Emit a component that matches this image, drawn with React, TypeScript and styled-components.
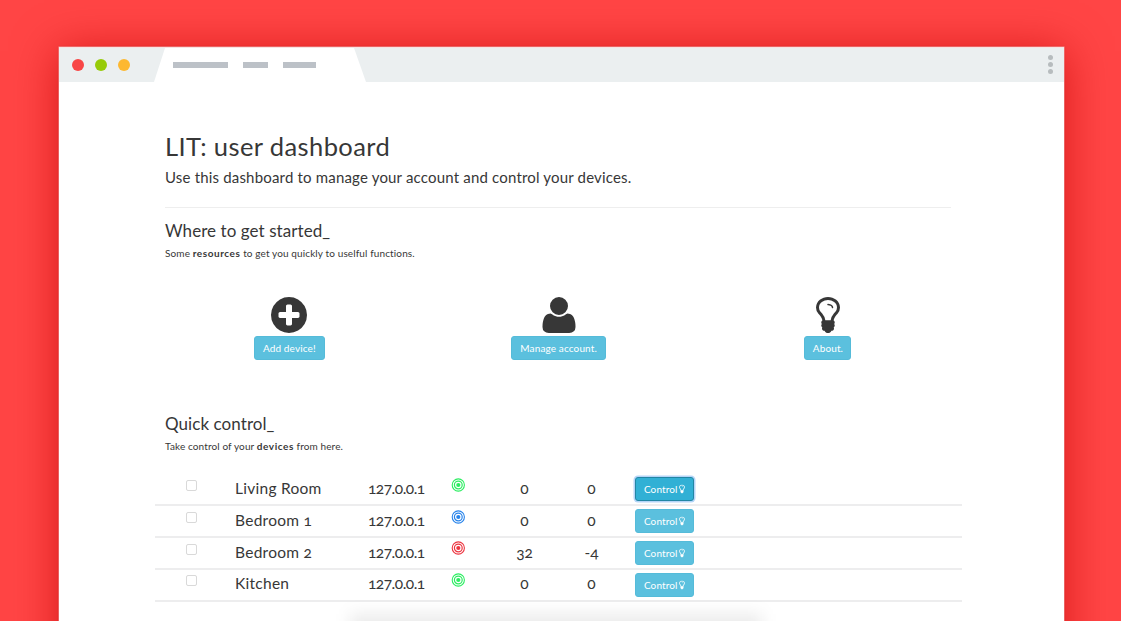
import React from "react";
import styled, { createGlobalStyle } from "styled-components";

const GlobalStyle = createGlobalStyle`
  * { box-sizing: border-box; }
  body {
    margin: 0;
    height: 621px;
    overflow: hidden;
    background: #ff4545;
    color: #373737;
    font-family: Lato, "Open Sans", sans-serif;
    font-feature-settings: "onum" 1;
  }
  h1, h2, p { margin: 0; font-weight: 400; white-space: nowrap; }
`;

const Page = styled.div`
  height: 621px;
  padding: 47px 57px 0 59px;
  overflow: hidden;
`;

const Window = styled.main`
  position: relative;
  height: 640px;
  background: #fff;
  box-shadow: 0 0 0 0.5px rgba(255, 205, 205, 0.7), 0 0 2px rgba(150, 0, 0, 0.4),
    0 4px 42px rgba(195, 0, 0, 0.66);
`;

const TitleBar = styled.header`
  display: flex;
  align-items: center;
  height: 35px;
  padding: 0 11px 0 12.5px;
  background: #ebeff0;
  border-top: 1px solid #f6e4e4;
`;

const Lights = styled.div`
  display: flex;
  gap: 11.4px;
  width: 82.5px;
  margin-top: -1px;
`;

const Light = styled.span<{ $color: string }>`
  width: 12px;
  height: 12px;
  border-radius: 50%;
  background: ${(p) => p.$color};
`;

const Tab = styled.div`
  display: flex;
  align-items: center;
  gap: 15px;
  width: 212px;
  height: 34px;
  padding-left: 19px;
  background: #fff;
  clip-path: polygon(11px 0, 200px 0, 212px 100%, 0 100%);
`;

const Dash = styled.span<{ $width: number }>`
  width: ${(p) => p.$width}px;
  height: 6px;
  background: #bcc1c7;
`;

const More = styled.div`
  display: flex;
  flex-direction: column;
  gap: 2px;
  margin: -2px 0 0 auto;
`;

const MoreDot = styled.span`
  width: 5px;
  height: 5px;
  border-radius: 50%;
  background: #b7bcbe;
`;

const Content = styled.div`
  padding: 49px 102px 0 96px;
`;

const Intro = styled.section`
  height: 77px;
  margin: 0 11px 0 10px;
  border-bottom: 1px solid #eee;
`;

const Title = styled.h1`
  font-size: 25.5px;
  line-height: 30px;
  letter-spacing: 0.4px;
`;

const Lead = styled.p`
  margin-top: 6px;
  font-size: 15px;
  line-height: 20px;
  letter-spacing: 0.18px;
`;

const Section = styled.section<{ $top: number }>`
  padding: ${(p) => p.$top}px 10px 0;
`;

const SectionTitle = styled.h2`
  font-size: 17px;
  line-height: 22px;
  letter-spacing: 0.07px;
`;

const Hint = styled.p`
  margin-top: 4px;
  font-size: 10px;
  line-height: 14px;
  letter-spacing: 0.12px;

  b { font-weight: 700; letter-spacing: 0.55px; }
`;

const Shortcuts = styled.div`
  display: grid;
  grid-template-columns: repeat(3, 269.3px);
  margin-top: 34px;
  margin-left: -10.3px;
  height: 66px;
`;

const Shortcut = styled.div`
  display: flex;
  flex-direction: column;
  align-items: center;

  > svg { display: block; }
`;

const Button = styled.button<{ $width: number; $active?: boolean }>`
  display: flex;
  align-items: center;
  justify-content: center;
  gap: 1.5px;
  width: ${(p) => p.$width}px;
  height: 24px;
  padding: 0;
  border: 1px solid ${(p) => (p.$active ? "#2386a4" : "#55bbd9")};
  border-radius: 3px;
  background: ${(p) => (p.$active ? "#31b0d5" : "#5bc0de")};
  box-shadow: ${(p) => (p.$active ? "0 0 0 1.5px #b5d5f8" : "none")};
  color: #fff;
  font: 400 10px/14px Lato, sans-serif;
  letter-spacing: 0.13px;
  white-space: nowrap;
`;

const Table = styled.div`
  margin-top: 21.6px;
`;

const Row = styled.div`
  display: grid;
  grid-template-columns: 80px 133px 83px 40px 67px 67px 1fr;
  height: 31.8px;
  border-bottom: 2px solid #ededee;
`;

const Cell = styled.span<{ $center?: boolean; $spacing?: number }>`
  padding-top: 3.5px;
  font-size: 15.5px;
  line-height: 20px;
  letter-spacing: ${(p) => p.$spacing ?? 0}px;
  text-align: ${(p) => (p.$center ? "center" : "left")};
  white-space: nowrap;
`;

const Checkbox = styled.span`
  width: 11px;
  height: 11px;
  margin: 5.4px 0 0 31px;
  border: 1px solid #d9d9d9;
  border-radius: 2px;
  background: #fff;
`;

const SignalSlot = styled.span`
  padding-top: 3.2px;

  svg { display: block; }
`;

const ButtonSlot = styled.span`
  padding: 2.8px 0 0 10px;
`;

const DockShadow = styled.div`
  position: absolute;
  left: 291px;
  top: 567px;
  width: 412px;
  height: 40px;
  background: rgba(0, 0, 0, 0.08);
  filter: blur(8px);
`;

const icons = {
  plus: "M1344 960v-128q0-26-19-45t-45-19h-256v-256q0-26-19-45t-45-19h-128q-26 0-45 19t-19 45v256h-256q-26 0-45 19t-19 45v128q0 26 19 45t45 19h256v256q0 26 19 45t45 19h128q26 0 45-19t19-45v-256h256q26 0 45-19t19-45zM1664 896q0 209-103 385.500t-279.500 279.500-385.500 103-385.500-103-279.500-279.500-103-385.500 103-385.500 279.500-279.500 385.500-103 385.500 103 279.500 279.500 103 385.500z",
  user: "M1600 1405q0 120-73 189.500t-194 69.500h-874q-121 0-194-69.500t-73-189.500q0-53 3.500-103.500t14-109 26.500-108.500 43-97.500 62-81 85.500-53.500 111.500-20q9 0 42 21.500t74.500 48 108 48 133.500 21.500 133.500-21.500 108-48 74.500-48 42-21.500q61 0 111.500 20t85.500 53.500 62 81 43 97.500 26.500 108.500 14 109 3.500 103.500zM1280 512q0 159-112.500 271.500t-271.500 112.500-271.500-112.500-112.500-271.500 112.500-271.500 271.500-112.500 271.500 112.500 112.500 271.500z",
  bulb: "M1120 576q0 13-9.500 22.500t-22.500 9.500-22.500-9.500-9.500-22.500q0-46-54-71t-106-25q-13 0-22.500-9.500t-9.500-22.500 9.500-22.500 22.500-9.500q50 0 99.500 16t87 54 37.500 90zM1280 576q0-72-34.500-134t-90-101.500-123-62-136.500-22.500-136.500 22.500-123 62-90 101.500-34.500 134q0 101 68 180 10 11 30.500 33t30.500 33q128 153 141 298h228q13-145 141-298 10-11 30.500-33t30.500-33q68-79 68-180zM1408 576q0 155-103 268-45 49-74.500 87t-59.500 95.500-34 107.500q47 28 47 82 0 37-25 64 25 27 25 64 0 52-45 81 13 23 13 47 0 46-31.500 71t-77.500 25q-20 44-60 70t-87 26-87-26-60-70q-46 0-77.500-25t-31.500-71q0-24 13-47-45-29-45-81 0-37 25-64-25-27-25-64 0-54 47-82-4-50-34-107.500t-59.500-95.500-74.500-87q-103-113-103-268 0-99 44.500-184.500t117-142 164-89 186.500-32.500 186.500 32.500 164 89 117 142 44.500 184.500z",
};

function Icon({ name, size }: { name: keyof typeof icons; size: number }) {
  const narrow = size < 20;
  return (
    <svg
      width={narrow ? size * 0.6 : size}
      height={size}
      viewBox={narrow ? "358 0 1076 1792" : "0 0 1792 1792"}
      fill="currentColor"
    >
      <path d={icons[name]} />
    </svg>
  );
}

function Signal({ color }: { color: string }) {
  return (
    <svg width="14" height="14" viewBox="0 0 14 14" fill="none" stroke={color}>
      <circle cx="7.3" cy="7" r="6.1" strokeWidth="1.1" />
      <circle cx="7.3" cy="7" r="3.9" strokeWidth="1.2" />
      <circle cx="7.3" cy="7" r="2.1" fill={color} stroke="none" />
    </svg>
  );
}

const shortcuts: { icon: keyof typeof icons; label: string; width: number }[] = [
  { icon: "plus", label: "Add device!", width: 71.5 },
  { icon: "user", label: "Manage account.", width: 95 },
  { icon: "bulb", label: "About.", width: 47 },
];

const devices = [
  { name: "Living Room", ip: "127.0.0.1", color: "#2bed61", a: "0", b: "0", active: true },
  { name: "Bedroom 1", ip: "127.0.0.1", color: "#2783ea", a: "0", b: "0" },
  { name: "Bedroom 2", ip: "127.0.0.1", color: "#ec3540", a: "32", b: "-4" },
  { name: "Kitchen", ip: "127.0.0.1", color: "#2bed61", a: "0", b: "0" },
];

export default function App() {
  return (
    <Page>
      <GlobalStyle />
      <Window>
        <TitleBar>
          <Lights>
            <Light $color="#f84646" />
            <Light $color="#97cb09" />
            <Light $color="#fdb831" />
          </Lights>
          <Tab>
            <Dash $width={55} />
            <Dash $width={25} />
            <Dash $width={33} />
          </Tab>
          <More>
            <MoreDot />
            <MoreDot />
            <MoreDot />
          </More>
        </TitleBar>
        <Content>
          <Intro>
            <Title>LIT: user dashboard</Title>
            <Lead>Use this dashboard to manage your account and control your devices.</Lead>
          </Intro>
          <Section $top={12}>
            <SectionTitle>Where to get started_</SectionTitle>
            <Hint>
              Some <b>resources</b> to get you quickly to uselful functions.
            </Hint>
            <Shortcuts>
              {shortcuts.map((s) => (
                <Shortcut key={s.label}>
                  <Icon name={s.icon} size={42} />
                  <Button $width={s.width}>{s.label}</Button>
                </Shortcut>
              ))}
            </Shortcuts>
          </Section>
          <Section $top={53}>
            <SectionTitle>Quick control_</SectionTitle>
            <Hint>
              Take control of your <b>devices</b> from here.
            </Hint>
          </Section>
          <Table>
            {devices.map((d) => (
              <Row key={d.name}>
                <Checkbox />
                <Cell $spacing={0.27}>{d.name}</Cell>
                <Cell $spacing={-0.5}>{d.ip}</Cell>
                <SignalSlot>
                  <Signal color={d.color} />
                </SignalSlot>
                <Cell $center>{d.a}</Cell>
                <Cell $center>{d.b}</Cell>
                <ButtonSlot>
                  <Button $width={59} $active={d.active}>
                    Control
                    <Icon name="bulb" size={10} />
                  </Button>
                </ButtonSlot>
              </Row>
            ))}
          </Table>
        </Content>
        <DockShadow />
      </Window>
    </Page>
  );
}
